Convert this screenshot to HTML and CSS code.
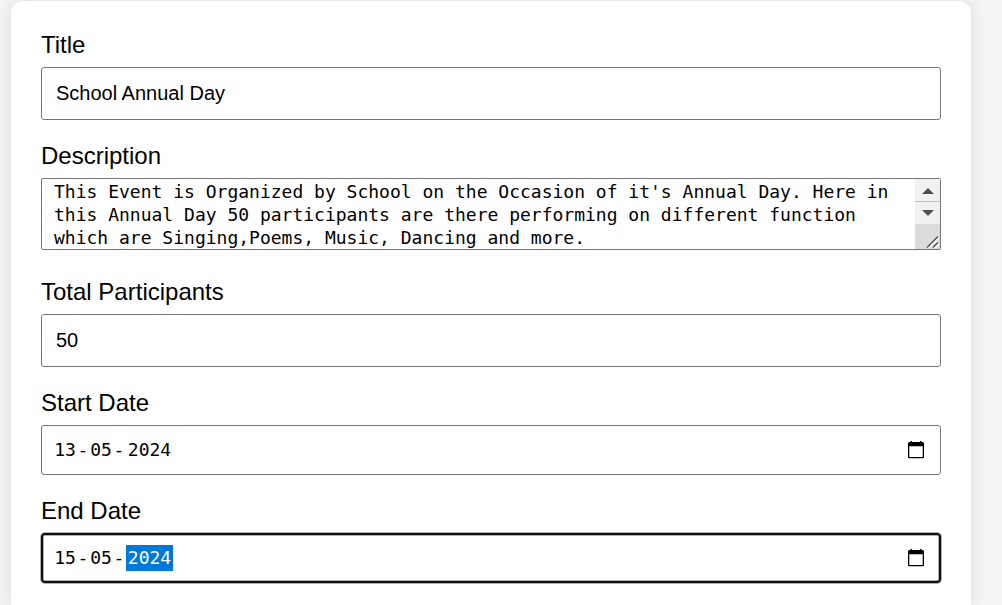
FILE: index.html
```html
<!DOCTYPE html>
<html lang="en">
<head>
  <meta charset="utf-8">
  <meta name="viewport" content="width=device-width, initial-scale=1">
  <title>Event</title>
  <link rel="stylesheet" href="styles.css">
</head>
<body>
  <form class="card">
    <div class="field">
      <label for="title">Title</label>
      <input class="control" id="title" type="text" value="School Annual Day">
    </div>

    <div class="field field-description">
      <label for="description">Description</label>
      <div class="area">
        <textarea class="area-text" id="description" wrap="off">This Event is Organized by School on the Occasion of it's Annual Day. Here in
this Annual Day 50 participants are there performing on different function
which are Singing,Poems, Music, Dancing and more.</textarea>
        <div class="scrollbar">
          <button class="scroll-button" type="button" aria-label="Scroll up">
            <svg width="12" height="6" viewBox="0 0 12 6"><path d="M0 6L6 0L12 6Z" fill="#505050"/></svg>
          </button>
          <button class="scroll-button scroll-down" type="button" aria-label="Scroll down">
            <svg width="12" height="6" viewBox="0 0 12 6"><path d="M0 0H12L6 6Z" fill="#505050"/></svg>
          </button>
          <div class="grip">
            <svg width="14" height="14" viewBox="0 0 14 14" fill="none" stroke-width="1.4">
              <path d="M2.500 13L13 2.500M8.500 13L13 8.500" stroke="#fff"/>
              <path d="M1 12.500L12 1.500M7 12.500L12 7.500" stroke="#505050"/>
            </svg>
          </div>
        </div>
      </div>
    </div>

    <div class="field">
      <label for="participants">Total Participants</label>
      <input class="control" id="participants" type="text" inputmode="numeric" value="50">
    </div>

    <div class="field">
      <label for="start-day">Start Date</label>
      <div class="date" role="group" aria-label="Start Date">
        <input class="part" id="start-day" type="text" aria-label="Day" value="13"><span class="dash">-</span><input class="part" type="text" aria-label="Month" value="05"><span class="dash">-</span><input class="part part-year" type="text" aria-label="Year" value="2024">
        <button class="picker" type="button" aria-label="Open start date calendar">
          <svg width="18" height="18" viewBox="0 0 18 18"><path d="M2.500 1H3.500V0H5V1H13V0H14.500V1H15.500Q17 1 17 2.500V16Q17 17.300 15.700 17.300H2.300Q1 17.300 1 16V2.500Q1 1 2.500 1ZM2.300 5.200V16H15.700V5.200Z" fill-rule="evenodd"/></svg>
        </button>
      </div>
    </div>

    <div class="field">
      <label for="end-day">End Date</label>
      <div class="date date-active" role="group" aria-label="End Date">
        <input class="part" id="end-day" type="text" aria-label="Day" value="15"><span class="dash">-</span><input class="part" type="text" aria-label="Month" value="05"><span class="dash">-</span><input class="part part-year part-selected" type="text" aria-label="Year" value="2024">
        <button class="picker" type="button" aria-label="Open end date calendar">
          <svg width="18" height="18" viewBox="0 0 18 18"><path d="M2.500 1H3.500V0H5V1H13V0H14.500V1H15.500Q17 1 17 2.500V16Q17 17.300 15.700 17.300H2.300Q1 17.300 1 16V2.500Q1 1 2.500 1ZM2.300 5.200V16H15.700V5.200Z" fill-rule="evenodd"/></svg>
        </button>
      </div>
    </div>
  </form>
</body>
</html>
```
FILE: styles.css
```css
* {
  box-sizing: border-box;
}

body {
  margin: 0;
  padding: 1px 31px 0 11px;
  background: #f4f4f4;
  color: #000;
  font-family: "Liberation Sans", Arial, sans-serif;
}

.card {
  display: flex;
  flex-direction: column;
  gap: 22px;
  min-height: calc(100vh - 1px);
  padding: 30px 30px 22px;
  background: #fff;
  border-radius: 12px 12px 0 0;
  box-shadow: 0 0 16px rgba(0, 0, 0, 0.1);
}

.field {
  display: flex;
  flex-direction: column;
  gap: 8px;
}

.field-description {
  margin-bottom: 6px;
}

label {
  font-size: 24px;
  line-height: 28px;
}

.control {
  width: 100%;
  padding: 14px;
  border: 1px solid #767676;
  border-radius: 3px;
  background: #fff;
  color: #000;
  font-family: inherit;
  font-size: 20px;
  line-height: 23px;
}

.area {
  display: flex;
  border: 1px solid #767676;
  border-radius: 2px;
}

.area-text {
  flex: 1;
  min-width: 0;
  height: 70px;
  padding: 1px 0 0 12px;
  border: 0;
  outline: 0;
  background: transparent;
  color: #000;
  font-family: "DejaVu Sans Mono", monospace;
  font-size: 18px;
  line-height: 23px;
  resize: none;
  overflow: hidden;
}

.scrollbar {
  display: flex;
  flex-direction: column;
  width: 25px;
  background: #dcdcdc;
}

.scroll-button {
  display: flex;
  align-items: center;
  justify-content: center;
  height: 22px;
  padding: 2px 0 0;
  border: 0;
  background: #f1f1f1;
}

.scroll-down {
  height: 23px;
  padding: 0;
  border-top: 1px solid #c1c1c1;
}

.grip {
  display: flex;
  flex: 1;
  align-items: flex-end;
  justify-content: flex-end;
}

.date {
  display: flex;
  align-items: center;
  height: 50px;
  padding: 0 15px 0 12px;
  border: 1px solid #767676;
  border-radius: 3px;
}

.date-active {
  padding: 0 14px 0 11px;
  border: 2px solid #101010;
  border-radius: 4px;
  box-shadow: inset 0 0 0 1px #b0b0b0, 0 0 0 1px #b0b0b0;
}

.part,
.dash {
  font-family: "DejaVu Sans Mono", monospace;
  font-size: 18px;
  line-height: 26px;
  text-align: center;
}

.part {
  width: 22px;
  height: 26px;
  padding: 0;
  border: 0;
  outline: 0;
  background: transparent;
  color: #000;
}

.dash {
  width: 14px;
}

.part-year {
  width: 47px;
}

.part-selected {
  background: #0078d7;
  color: #fff;
}

.picker {
  display: flex;
  margin-left: auto;
  padding: 0;
  border: 0;
  background: transparent;
}
```
